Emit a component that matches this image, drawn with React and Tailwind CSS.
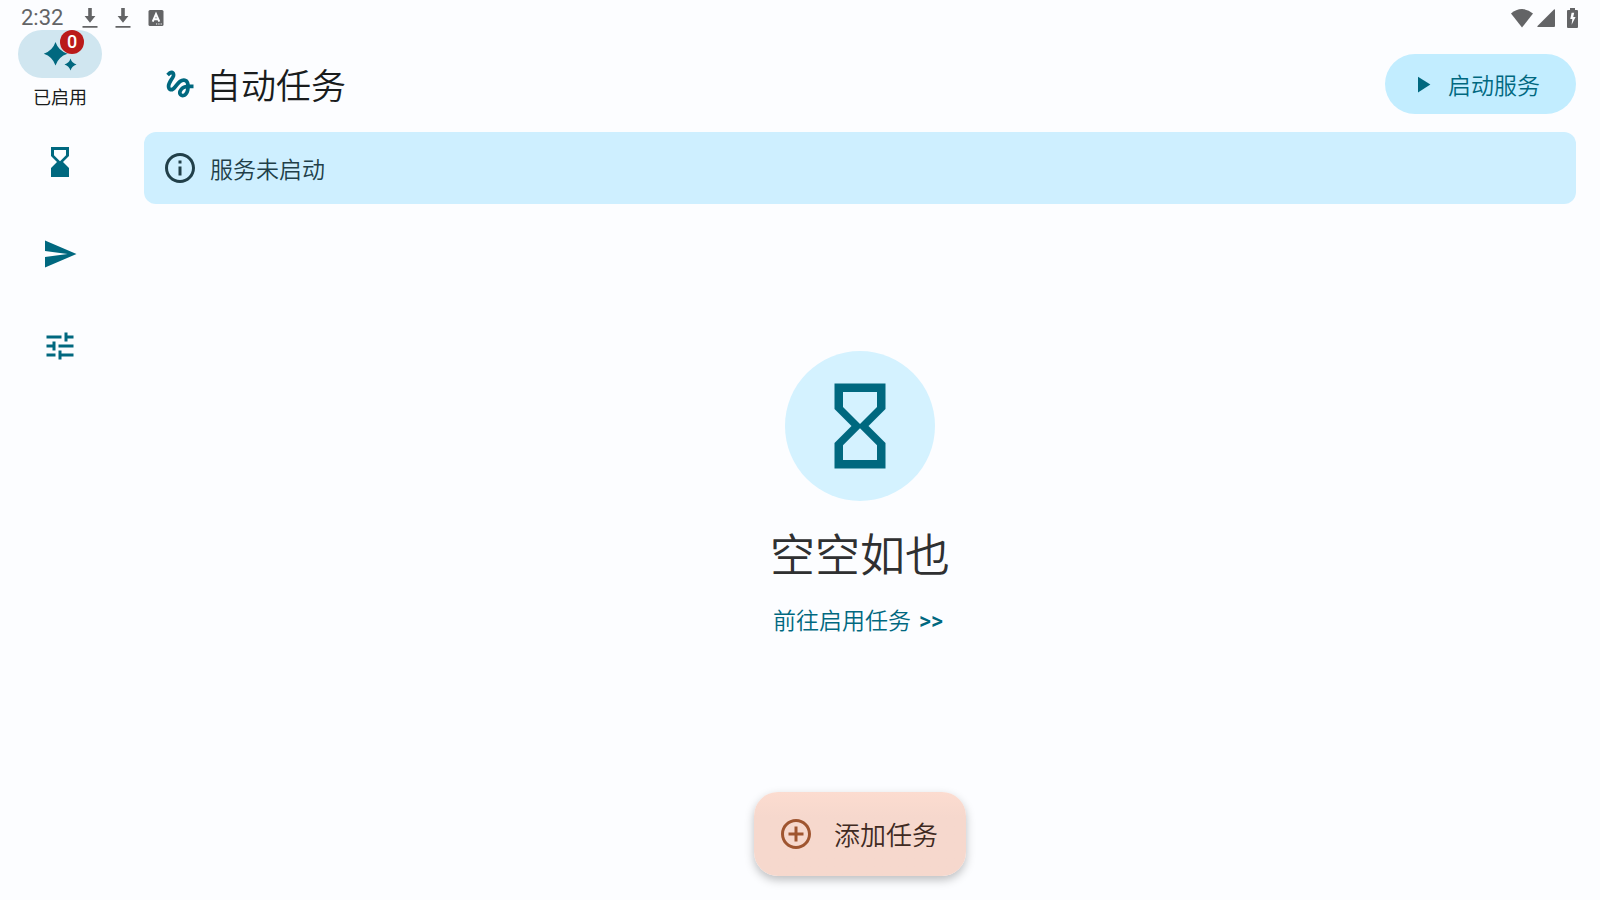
import {
  MdAddCircleOutline,
  MdGesture,
  MdHourglassBottom,
  MdHourglassEmpty,
  MdOutlineInfo,
  MdPlayArrow,
  MdSend,
  MdTune,
} from 'react-icons/md';

function DownloadIcon() {
  return (
    <svg viewBox="0 0 16 20" className="h-5 w-4" fill="currentColor" aria-hidden="true">
      <path d="M6.200 0h3.600v8h3.600L8 14.800 2.600 8h3.600zM.5 18h15v1.800H.5z" />
    </svg>
  );
}

function LanguageIcon() {
  return (
    <svg viewBox="0 0 16 16" className="h-4 w-4" aria-hidden="true">
      <rect x="0.5" y="0" width="15" height="16" rx="1.5" fill="currentColor" />
      <path d="M4.700 11.600 8 4l3.300 7.600M6 9.200h4" fill="none" stroke="#fcfdff" strokeWidth="2" />
      <path d="M8 14h1.200M10.300 14h1.200M12.600 14h1.200" stroke="#fcfdff" strokeWidth="1.200" />
    </svg>
  );
}

function SparkleIcon() {
  return (
    <svg viewBox="0 0 24 24" className="size-9" fill="currentColor" aria-hidden="true">
      <path d="M9 4Q10.900 9.800 17 11.800 10.900 13.800 9 19.600 7.100 13.800 1.200 11.800 7.100 9.800 9 4Z" />
      <path d="M19 15Q19.900 18.100 23 19 19.900 19.900 19 23 18.100 19.900 15 19 18.100 18.100 19 15Z" />
    </svg>
  );
}

function StatusBar() {
  return (
    <header className="flex h-[30px] shrink-0 items-end justify-between px-[21px] text-[#636466]">
      <div className="flex h-6 items-center gap-[17px]">
        <time className="mr-[2px] font-[Roboto,sans-serif] text-[22px] leading-6">2:32</time>
        <DownloadIcon />
        <DownloadIcon />
        <LanguageIcon />
      </div>
      <div className="flex h-6 items-center pr-px">
        <svg viewBox="0 0 22 19" className="mr-1 h-[19px] w-[22px]" fill="currentColor" aria-label="Wi-Fi">
          <path d="M0 4.500Q5 0 11 0t11 4.500L11 18.500z" />
        </svg>
        <svg viewBox="0 0 18 18" className="mr-3 h-[18px] w-[18px]" fill="currentColor" aria-label="信号">
          <path d="M18 1v16q0 1-1 1H1q-1.200 0-.5-1L17 .5q1-.8 1 .5z" />
        </svg>
        <svg viewBox="0 0 11 20" className="h-5 w-[11px]" fill="currentColor" aria-label="充电中">
          <path
            fillRule="evenodd"
            d="M3 0h5v2h2q1 0 1 1v16q0 1-1 1H1q-1 0-1-1V3q0-1 1-1h2zM7.200 4.800H4.600L3.300 11h2l-.7 5.800L8.600 9H6.200z"
          />
        </svg>
      </div>
    </header>
  );
}

function NavItem({ label, icon: Icon }) {
  return (
    <a href="#" aria-label={label} className="flex h-[84px] w-full items-center justify-center">
      <Icon className="size-9" />
    </a>
  );
}

function NavRail() {
  return (
    <nav className="flex w-[120px] shrink-0 flex-col items-center gap-2 text-[#00687f]">
      <a href="#" aria-current="page" className="flex h-[82px] flex-col items-center gap-[6px]">
        <span className="relative flex h-12 w-[84px] items-center justify-center rounded-full bg-[#d0e6f0]">
          <SparkleIcon />
          <span className="absolute left-[42px] top-0 flex size-6 items-center justify-center rounded-full bg-[#ba1a1a] font-[Roboto,sans-serif] text-[18px] font-medium leading-6 text-white">
            0
          </span>
        </span>
        <span className="text-[18px] leading-6 text-[#191c1d]">已启用</span>
      </a>
      <NavItem label="定时" icon={MdHourglassBottom} />
      <NavItem label="发送" icon={MdSend} />
      <NavItem label="设置" icon={MdTune} />
    </nav>
  );
}

export default function App() {
  return (
    <div className="flex min-h-screen flex-col bg-[#fcfdff] font-['Noto_Sans_CJK_SC',sans-serif]">
      <StatusBar />
      <div className="flex grow">
        <NavRail />
        <main className="flex grow flex-col px-6 pb-6 pt-6">
          <div className="flex items-center justify-between">
            <h1 className="flex items-center gap-2 pl-[18px] text-[35px] font-[350] leading-[48px] text-[#191c1d]">
              <MdGesture className="size-9 text-[#00687f]" />
              自动任务
            </h1>
            <button
              type="button"
              className="flex h-[60px] items-center gap-3 rounded-full bg-[#c2edff] pl-6 pr-9 text-[23px] font-[350] leading-8 text-[#00687f]"
            >
              <MdPlayArrow className="size-[27px]" />
              启动服务
            </button>
          </div>

          <p
            role="status"
            className="mt-[18px] flex h-[72px] items-center gap-3 rounded-xl bg-[#ceefff] px-[18px] text-[23px] font-[350] leading-8 text-[#213f49]"
          >
            <MdOutlineInfo className="size-9" />
            服务未启动
          </p>

          <section className="flex grow flex-col items-center justify-center">
            <div className="flex size-[150px] items-center justify-center rounded-full bg-[#d4f2ff]">
              <MdHourglassEmpty className="size-[102px] text-[#00687f]" />
            </div>
            <h2 className="mt-6 text-[45px] font-[350] leading-[56px] text-[#2f3031]">空空如也</h2>
            <a href="#" className="mb-[6px] mt-5 flex items-baseline gap-2 pr-1 text-[23px] font-[350] leading-9 text-[#00687f]">
              前往启用任务
              <span className="font-[Roboto,sans-serif] font-medium">&gt;&gt;</span>
            </a>
          </section>

          <button
            type="button"
            className="flex h-[84px] items-center gap-5 self-center rounded-3xl bg-linear-to-b from-[#fcdcd0] to-[#f6d8cd] to-30% pl-6 pr-7 text-[26px] font-[350] leading-9 text-[#3f2a22] shadow-[0_4px_10px_rgba(0,0,0,0.25)]"
          >
            <MdAddCircleOutline className="size-9 text-[#9f5530]" />
            添加任务
          </button>
        </main>
      </div>
    </div>
  );
}
